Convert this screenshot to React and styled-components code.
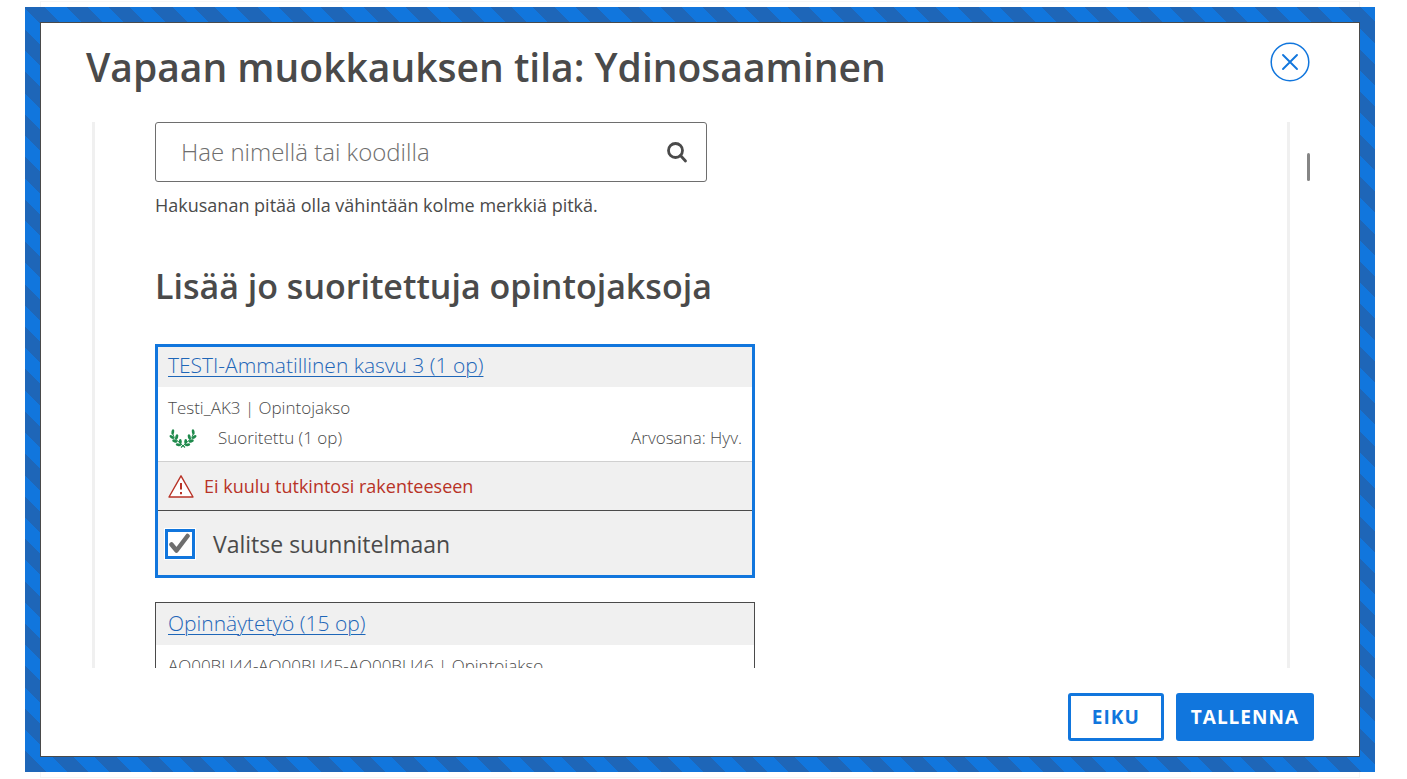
import { useState } from "react";
import styled, { createGlobalStyle } from "styled-components";

const GlobalStyle = createGlobalStyle`
  *, *::before, *::after {
    box-sizing: border-box;
  }

  body {
    margin: 0;
    background: #fff;
    color: #4a4a4a;
    font-family: "Open Sans", "Noto Sans", sans-serif;
  }
`;

const Page = styled.div`
  height: 100vh;
  padding: 1px 47px 1px 40px;
`;

const Sheet = styled.div`
  height: 100%;
  padding: 5px 0;
  border: 1px solid #f5f5f5;
`;

const Frame = styled.section`
  height: 100%;
  margin: 0 -16px;
  padding: 15px;
  background: repeating-linear-gradient(
    45deg,
    #1e66b8,
    #1e66b8 15px,
    #1176dd 15px,
    #1176dd 30px
  );
`;

const Dialog = styled.div`
  display: flex;
  flex-direction: column;
  height: 100%;
  border: 1px solid #4a4a4a;
  background: #fff;
`;

const Header = styled.header`
  display: flex;
  align-items: flex-start;
  justify-content: space-between;
  flex: none;
  height: 99px;
  padding: 19px 49px 0 45px;
`;

const Title = styled.h1`
  margin: 0;
  font-size: 39px;
  font-weight: 600;
  line-height: 50px;
`;

const CloseButton = styled.button`
  width: 40px;
  height: 40px;
  padding: 0;
  border: none;
  background: none;
  color: #1176dd;
  cursor: pointer;

  svg {
    display: block;
  }
`;

const ScrollRow = styled.div`
  display: flex;
  flex: 1;
  min-height: 0;
  padding: 0 49px 0 51px;
`;

const Content = styled.main`
  flex: 1;
  overflow: hidden;
  padding: 0 60px;
  border: solid #f0f0f0;
  border-width: 0 3px;
`;

const ScrollThumb = styled.div`
  width: 3px;
  height: 28px;
  margin: 31px 0 0 17px;
  border-radius: 2px;
  background: #858585;
`;

const SearchBox = styled.div`
  display: flex;
  align-items: center;
  max-width: 552px;
  height: 60px;
  padding: 0 17px 0 25px;
  border: 1px solid #6e6e6e;
  border-radius: 3px;
`;

const SearchInput = styled.input`
  flex: 1;
  min-width: 0;
  padding: 0 0 2px;
  border: none;
  outline: none;
  background: none;
  color: #4a4a4a;
  font-family: inherit;
  font-size: 24px;
  font-weight: 300;

  &::placeholder {
    color: #6e6e6e;
    opacity: 1;
  }
`;

const SearchButton = styled.button`
  width: 24px;
  height: 24px;
  padding: 0;
  border: none;
  background: none;
  color: #4a4a4a;
  cursor: pointer;

  svg {
    display: block;
  }
`;

const Hint = styled.p`
  margin: 11px 0 0;
  font-size: 18px;
  font-weight: 400;
  line-height: 24px;
`;

const SectionTitle = styled.h2`
  margin: 46px 0 0;
  font-size: 34px;
  font-weight: 600;
  line-height: 46px;
`;

const CardList = styled.div`
  display: flex;
  flex-direction: column;
  gap: 24px;
  max-width: 600px;
  margin-top: 35px;
`;

const Card = styled.article`
  border: 1px solid #4a4a4a;
  outline: ${({ $selected }) => ($selected ? "3px solid #1176dd" : "none")};
  outline-offset: -3px;
`;

const CardHeader = styled.div`
  height: 42px;
  padding: 0 12px;
  background: #f0f0f0;
  line-height: 40px;
`;

const CardLink = styled.a`
  color: #1e66b8;
  font-size: 21px;
  font-weight: 300;
  text-decoration-thickness: 1px;
  text-underline-offset: 3px;
`;

const CardBody = styled.div`
  height: 74px;
  padding: 6px 12px;
  font-size: 17px;
  font-weight: 300;
  line-height: 30px;
`;

const StatusRow = styled.div`
  display: flex;
  align-items: center;
`;

const Status = styled.span`
  flex: 1;
  margin-left: 20px;
`;

const Warning = styled.div`
  display: flex;
  align-items: center;
  gap: 10px;
  height: 49px;
  padding: 0 12px;
  border-top: 1px solid #d0d0d0;
  background: #f0f0f0;
  color: #b83327;
  font-size: 18px;
  font-weight: 400;
  line-height: 24px;
`;

const SelectLabel = styled.label`
  display: flex;
  align-items: center;
  gap: 17px;
  height: 67px;
  padding: 0 8px;
  border-top: 1px solid #4a4a4a;
  background: #f0f0f0;
  font-size: 23px;
  line-height: 30px;
  cursor: pointer;
`;

const CheckWrap = styled.span`
  display: grid;
  place-items: center;

  > * {
    grid-area: 1 / 1;
  }

  svg {
    visibility: ${({ $checked }) => ($checked ? "visible" : "hidden")};
    pointer-events: none;
  }
`;

const Checkbox = styled.input`
  appearance: none;
  width: 32px;
  height: 32px;
  margin: 0;
  border: 1px solid #fff;
  background: #fff;
  box-shadow: inset 0 0 0 3px #1176dd;
`;

const Footer = styled.footer`
  display: flex;
  flex: none;
  align-items: flex-start;
  justify-content: flex-end;
  gap: 12px;
  height: 88px;
  padding: 25px 45px 0;
`;

const Button = styled.button`
  height: 48px;
  padding: ${({ $primary }) => ($primary ? "0 12px" : "0 21px")};
  border: 3px solid #1176dd;
  border-radius: 3px;
  background: ${({ $primary }) => ($primary ? "#1176dd" : "#fff")};
  color: ${({ $primary }) => ($primary ? "#fff" : "#1176dd")};
  font-family: inherit;
  font-size: 19px;
  font-weight: 700;
  letter-spacing: 1px;
  line-height: 24px;
  text-transform: uppercase;
  cursor: pointer;
`;

const CloseIcon = () => (
  <svg width="40" height="40" viewBox="0 0 40 40" fill="none" stroke="currentColor" aria-hidden="true">
    <circle cx="20" cy="20" r="18.8" strokeWidth="1.5" />
    <path d="M13 13l14 14M27 13L13 27" strokeWidth="1.9" strokeLinecap="round" />
  </svg>
);

const SearchIcon = () => (
  <svg width="24" height="24" viewBox="0 0 24 24" fill="none" stroke="currentColor" aria-hidden="true">
    <circle cx="10.5" cy="10.5" r="7" strokeWidth="2.8" />
    <path d="M15.5 15.5l5 5.5" strokeWidth="2.8" strokeLinecap="round" />
  </svg>
);

const LaurelBranch = () => (
  <g>
    <path d="M4.5 5Q5.5 10 9 12.5T15 18" fill="none" stroke="#1f8a4c" strokeWidth="1" />
    <ellipse cx="4.8" cy="4" rx="1.4" ry="2.7" transform="rotate(10 4.8 4)" />
    <ellipse cx="3.8" cy="9" rx="1.4" ry="2.6" transform="rotate(-56 3.8 9)" />
    <ellipse cx="8.7" cy="9" rx="1.5" ry="2.8" transform="rotate(14 8.7 9)" />
    <ellipse cx="6.8" cy="13" rx="1.5" ry="2.7" transform="rotate(-72 6.8 13)" />
    <ellipse cx="12.3" cy="13.5" rx="1.5" ry="2.6" transform="rotate(-4 12.3 13.5)" />
    <ellipse cx="10.5" cy="16.8" rx="1.4" ry="2.8" transform="rotate(-84 10.5 16.8)" />
  </g>
);

const LaurelIcon = () => (
  <svg width="30" height="20" viewBox="0 0 30 20" fill="#1f8a4c" aria-hidden="true">
    <LaurelBranch />
    <g transform="matrix(-1 0 0 1 30 0)">
      <LaurelBranch />
    </g>
    <path d="M13 19.5l2-2 2 2" fill="none" stroke="#1f8a4c" strokeWidth="1.2" />
  </svg>
);

const WarningIcon = () => (
  <svg width="26" height="24" viewBox="0 0 26 24" fill="none" stroke="currentColor" aria-hidden="true">
    <path d="M13 1.8L25 23H1Z" fill="#fff" strokeWidth="1.4" strokeLinejoin="round" />
    <path d="M13 9v6.5M13 18v2.2" strokeWidth="2" />
  </svg>
);

const CheckIcon = () => (
  <svg width="22" height="22" viewBox="0 0 22 22" fill="none" stroke="#6e6e6e" aria-hidden="true">
    <path d="M2.5 11.5L7.5 17.5L18.5 3" strokeWidth="4.5" strokeLinecap="round" strokeLinejoin="round" />
  </svg>
);

const courses = [
  {
    id: "ak3",
    name: "TESTI-Ammatillinen kasvu 3 (1 op)",
    info: "Testi_AK3 | Opintojakso",
    status: "Suoritettu (1 op)",
    grade: "Arvosana: Hyv.",
    warning: "Ei kuulu tutkintosi rakenteeseen",
  },
  {
    id: "ont",
    name: "Opinnäytetyö (15 op)",
    info: "AO00BU44-AO00BU45-AO00BU46 | Opintojakso",
  },
];

const CourseCard = ({ course, selected, onToggle }) => (
  <Card $selected={selected}>
    <CardHeader>
      <CardLink href="#">{course.name}</CardLink>
    </CardHeader>
    <CardBody>
      <div>{course.info}</div>
      {course.status && (
        <StatusRow>
          <LaurelIcon />
          <Status>{course.status}</Status>
          <span>{course.grade}</span>
        </StatusRow>
      )}
    </CardBody>
    {course.warning && (
      <>
        <Warning>
          <WarningIcon />
          {course.warning}
        </Warning>
        <SelectLabel>
          <CheckWrap $checked={selected}>
            <Checkbox type="checkbox" checked={selected} onChange={onToggle} />
            <CheckIcon />
          </CheckWrap>
          Valitse suunnitelmaan
        </SelectLabel>
      </>
    )}
  </Card>
);

export default function App() {
  const [search, setSearch] = useState("");
  const [selectedIds, setSelectedIds] = useState(["ak3"]);

  const toggle = (id) => {
    setSelectedIds((ids) => (ids.includes(id) ? ids.filter((i) => i !== id) : [...ids, id]));
  };

  return (
    <Page>
      <GlobalStyle />
      <Sheet>
        <Frame>
          <Dialog role="dialog" aria-labelledby="dialog-title">
            <Header>
              <Title id="dialog-title">Vapaan muokkauksen tila: Ydinosaaminen</Title>
              <CloseButton type="button" aria-label="Sulje">
                <CloseIcon />
              </CloseButton>
            </Header>

            <ScrollRow>
              <Content>
                <SearchBox>
                  <SearchInput
                    type="text"
                    aria-label="Hae nimellä tai koodilla"
                    aria-describedby="search-hint"
                    placeholder="Hae nimellä tai koodilla"
                    value={search}
                    onChange={(e) => setSearch(e.target.value)}
                  />
                  <SearchButton type="button" aria-label="Hae">
                    <SearchIcon />
                  </SearchButton>
                </SearchBox>
                <Hint id="search-hint">Hakusanan pitää olla vähintään kolme merkkiä pitkä.</Hint>

                <SectionTitle>Lisää jo suoritettuja opintojaksoja</SectionTitle>
                <CardList>
                  {courses.map((course) => (
                    <CourseCard
                      key={course.id}
                      course={course}
                      selected={selectedIds.includes(course.id)}
                      onToggle={() => toggle(course.id)}
                    />
                  ))}
                </CardList>
              </Content>
              <ScrollThumb />
            </ScrollRow>

            <Footer>
              <Button type="button">Eiku</Button>
              <Button type="button" $primary>
                Tallenna
              </Button>
            </Footer>
          </Dialog>
        </Frame>
      </Sheet>
    </Page>
  );
}
